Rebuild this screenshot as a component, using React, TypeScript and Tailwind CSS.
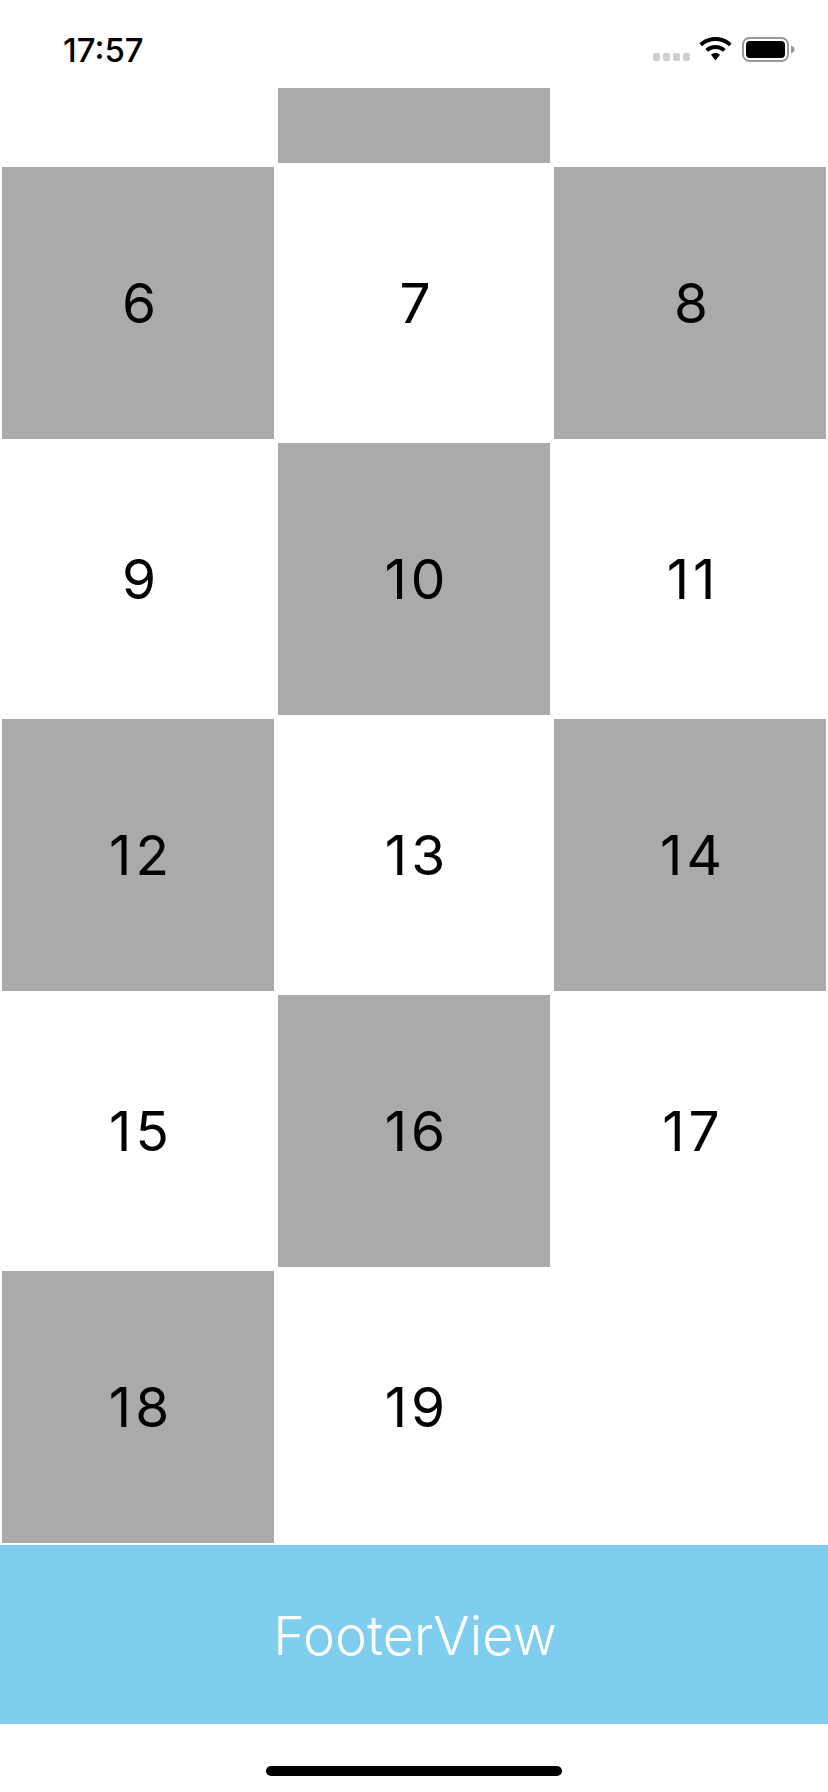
const cells = Array.from({ length: 14 }, (_, i) => i + 6);

function StatusIcons() {
  return (
    <div className="flex items-start">
      <div className="mt-[53px] flex gap-[3px]">
        {[0, 1, 2, 3].map((d) => (
          <div key={d} className="h-[8px] w-[7px] rounded-[2px] bg-[#cfcfcf]" />
        ))}
      </div>
      <svg className="ml-[9px] mt-[37px]" width="33" height="24" viewBox="0 0 33 24" aria-hidden="true">
        <path d="M16.5 0C10.2 0 4.6 2.4 0.4 6.4L3 9.2C6.5 5.9 11.2 3.9 16.5 3.9C21.8 3.9 26.5 5.9 30 9.2L32.6 6.4C28.4 2.4 22.8 0 16.5 0Z" fill="#000" />
        <path d="M16.5 8C12.6 8 9 9.5 6.3 12L9 14.8C11 13 13.6 11.9 16.5 11.9C19.4 11.9 22 13 24 14.8L26.7 12C24 9.5 20.4 8 16.5 8Z" fill="#000" />
        <path d="M16.5 16C14.9 16 13.2 16.6 12 17.8L16.5 23.5L21 17.8C19.8 16.6 18.1 16 16.5 16Z" fill="#000" />
      </svg>
      <svg className="ml-[10px] mt-[37px]" width="53" height="25" viewBox="0 0 53 25" aria-hidden="true">
        <rect x="1" y="1" width="45" height="23" rx="6.5" fill="none" stroke="#999" strokeWidth="2" />
        <rect x="4" y="4" width="39" height="17" rx="4" fill="#000" />
        <path d="M49 8.5C51 9 52.5 10.5 52.5 12.5C52.5 14.5 51 16 49 16.5Z" fill="#999" />
      </svg>
    </div>
  );
}

export default function App() {
  return (
    <div className="flex h-[1792px] w-[828px] flex-col overflow-hidden bg-white font-['Inter',sans-serif] text-black">
      <header className="flex h-[88px] shrink-0 justify-between pl-[63px] pr-[33px]">
        <span className="mt-[32px] text-[33px] font-medium leading-[36px]">17:57</span>
        <StatusIcons />
      </header>
      <main className="flex shrink-0 flex-col gap-[4px] px-[2px]">
        <div className="grid grid-cols-[272px_272px_272px] gap-[4px]">
          <div className="col-start-2 h-[75px] bg-[#aaaaaa]" />
        </div>
        <div className="grid grid-cols-[272px_272px_272px] auto-rows-[272px] gap-[4px]">
          {cells.map((n) => (
            <div
              key={n}
              className={`flex items-center justify-center pl-[6px] text-[55px] font-normal leading-none tracking-[4px] ${n % 2 === 0 ? "bg-[#aaaaaa]" : "bg-white"}`}
            >
              {n}
            </div>
          ))}
        </div>
      </main>
      <footer className="mt-[2px] flex h-[179px] shrink-0 items-center justify-center bg-[#7fcdef] pl-[2px] pt-[2px] text-[54px] font-light leading-none text-white">
        FooterView
      </footer>
      <div className="flex flex-1 items-start justify-center pt-[42px]">
        <div className="h-[10px] w-[296px] rounded-full bg-black" />
      </div>
    </div>
  );
}
